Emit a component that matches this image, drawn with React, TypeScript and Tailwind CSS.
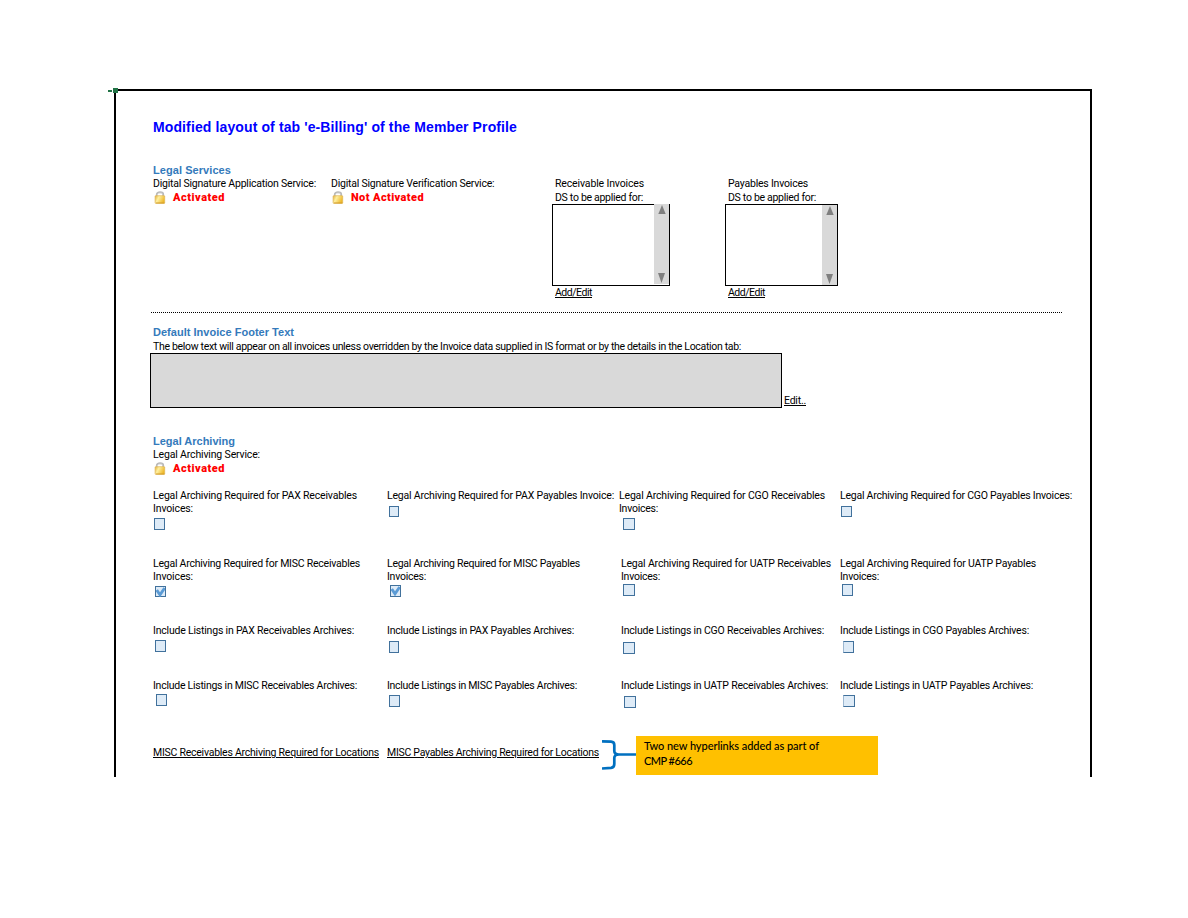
import { useLayoutEffect, useRef, useState } from "react";
import clsx from "clsx";

/** A single line of text whose letters are spaced so that it spans `w` pixels. */
function Line({ w, className, children }: { w: number; className?: string; children: string }) {
  const ref = useRef<HTMLSpanElement>(null);
  const [spacing, setSpacing] = useState(0);
  useLayoutEffect(() => {
    const el = ref.current;
    if (!el) return;
    el.style.letterSpacing = "0px";
    const natural = el.getBoundingClientRect().width;
    const next = (w - natural) / children.length;
    el.style.letterSpacing = `${next}px`;
    setSpacing(next);
  }, [w, children]);
  return (
    <div className="flex whitespace-nowrap">
      <span ref={ref} className={clsx("shrink-0", className)} style={{ letterSpacing: spacing }}>
        {children}
      </span>
    </div>
  );
}

const label = "h-[13px] text-[10.5px] leading-[13px]";
const link = "h-[13px] text-[10.5px] leading-[13px] underline underline-offset-[1px] decoration-1";
const heading = "h-[14px] text-[11px] leading-[14px] font-bold text-[#347abb] font-['Liberation_Sans',sans-serif]";

function Lock() {
  return (
    <svg width="12" height="13" viewBox="0 0 12 13" className="shrink-0">
      <defs>
        <linearGradient id="brass" x1="0" x2="1" y1="0" y2="0.4">
          <stop offset="0" stopColor="#e0ae3c" />
          <stop offset="0.4" stopColor="#fff0a0" />
          <stop offset="1" stopColor="#eeb92c" />
        </linearGradient>
      </defs>
      <path d="M2.800 6V3.4C2.800 .5 9.200 .5 9.200 3.400V6" fill="none" stroke="#b9b9b9" strokeWidth="1.900" />
      <path d="M3.600 5V3.500C3.800 1.800 8 1.500 8.700 3.200" fill="none" stroke="#e6e6e6" strokeWidth=".6" />
      <rect x="1.100" y="4.700" width="9.600" height="7.700" rx=".6" fill="url(#brass)" stroke="#dfb554" strokeWidth=".7" />
      <path d="M2 11.900H10.300" stroke="#d29c2c" strokeWidth=".8" />
    </svg>
  );
}

function Status({ text, w }: { text: string; w: number }) {
  return (
    <div className="flex h-[14px] items-start pl-px">
      <Lock />
      <div className="pl-[7px]">
        <Line w={w} className="h-[14px] text-[11px] leading-[14px] font-black text-[#ff0000]">{text}</Line>
      </div>
    </div>
  );
}

function ListBox({ size, bar, title, w }: { size: string; bar?: string; title: string; w: number }) {
  return (
    <div>
      <div className="pl-[3px]">
        <Line w={w} className={label}>{title}</Line>
        <div className="h-px" />
        <Line w={88} className={label}>DS to be applied for:</Line>
      </div>
      <div className={clsx("flex h-[82px] justify-end border border-black bg-white", size)}>
        <div className={clsx("flex w-[15px] flex-col items-center justify-between bg-[#d9d9d9] pt-px", bar)}>
          <svg width="8" height="9" viewBox="0 0 8 9"><path d="M4 0L7.700 9H.3Z" fill="#7f7f7f" /></svg>
          <svg width="7" height="10" viewBox="0 0 7 10"><path d="M0 0H7L3.500 10Z" fill="#7f7f7f" /></svg>
        </div>
      </div>
      <div className="pl-[3px]">
        <Line w={37} className={link}>Add/Edit</Line>
      </div>
    </div>
  );
}

function Box({ place, checked }: { place: string; checked?: boolean }) {
  return (
    <div className={clsx("border border-[#41719c] bg-[#deebf7]", place)}>
      {checked && (
        <svg width="9" height="10" viewBox="0 0 9 10" className="block">
          <path d="M.7 3L4 7.800L8.700 1" fill="none" stroke="#5b9bd5" strokeWidth="2.900" />
        </svg>
      )}
    </div>
  );
}

type Cell = { lines: [string, number][]; box: string; checked?: boolean; shift?: string };

const rows: { height: string; cells: Cell[] }[] = [
  {
    height: "h-[68px]",
    cells: [
      { lines: [["Legal Archiving Required for PAX Receivables", 204], ["Invoices:", 40]], box: "ml-px mt-[3px] w-[11px] h-[12px]" },
      { lines: [["Legal Archiving Required for PAX Payables Invoice:", 227]], box: "ml-[2px] mt-[4px] w-[10px] h-[11px]" },
      { lines: [["Legal Archiving Required for CGO Receivables", 206], ["Invoices:", 39]], box: "ml-[4px] mt-[3px] w-[12px] h-[12px]", shift: "-ml-[2px] mr-[2px]" },
      { lines: [["Legal Archiving Required for CGO Payables Invoices:", 232]], box: "ml-px mt-[4px] w-[11px] h-[11px]" },
    ],
  },
  {
    height: "h-[67px]",
    cells: [
      { lines: [["Legal Archiving Required for MISC Receivables", 207], ["Invoices:", 40]], box: "ml-[2px] mt-[3px] w-[11px] h-[11px]", checked: true },
      { lines: [["Legal Archiving Required for MISC Payables", 193], ["Invoices:", 39]], box: "ml-[3px] mt-[2px] w-[11px] h-[12px]", checked: true },
      { lines: [["Legal Archiving Required for UATP Receivables", 210], ["Invoices:", 39]], box: "ml-[2px] mt-px w-[12px] h-[12px]" },
      { lines: [["Legal Archiving Required for UATP Payables", 196], ["Invoices:", 39]], box: "ml-[2px] mt-px w-[11px] h-[12px]" },
    ],
  },
  {
    height: "h-[55px]",
    cells: [
      { lines: [["Include Listings in PAX Receivables Archives:", 201]], box: "ml-[2px] mt-[3px] w-[11px] h-[12px]" },
      { lines: [["Include Listings in PAX Payables Archives:", 187]], box: "ml-[2px] mt-[4px] w-[10px] h-[12px]" },
      { lines: [["Include Listings in CGO Receivables Archives:", 203]], box: "ml-[2px] mt-[5px] w-[12px] h-[12px]" },
      { lines: [["Include Listings in CGO Payables Archives:", 189]], box: "ml-[3px] mt-[4px] w-[11px] h-[12px] border-l-[#9db8d2]" },
    ],
  },
  {
    height: "h-[67px]",
    cells: [
      { lines: [["Include Listings in MISC Receivables Archives:", 204]], box: "ml-[3px] mt-[2px] w-[11px] h-[12px]" },
      { lines: [["Include Listings in MISC Payables Archives:", 190]], box: "ml-[2px] mt-[3px] w-[11px] h-[12px]" },
      { lines: [["Include Listings in UATP Receivables Archives:", 207]], box: "ml-[3px] mt-[4px] w-[12px] h-[12px]" },
      { lines: [["Include Listings in UATP Payables Archives:", 193]], box: "ml-[3px] mt-[3px] w-[12px] h-[12px] border-l-[#9db8d2]" },
    ],
  },
];

export default function App() {
  return (
    <div className="h-[918px] w-[1188px] overflow-hidden bg-white pt-[89px] pl-[114px] font-[Roboto,sans-serif] text-black">
      <main className="relative h-[688px] w-[978px] border-x-2 border-t-2 border-black pt-[28px] pl-[37px]">
        <div className="absolute -top-[3px] -left-[3px] size-[5px] bg-[#217346]" />
        <div className="absolute -top-px -left-[8px] h-[2px] w-[4px] bg-[#217346]" />

        <Line w={364} className="h-[16px] font-['Liberation_Sans',sans-serif] text-[14px] leading-[16px] font-bold text-[#0000ff]">
          Modified layout of tab 'e-Billing' of the Member Profile
        </Line>

        <section className="mt-[28px] h-[149px]">
          <Line w={78} className={heading}>Legal Services</Line>
          <div className="flex items-start">
            <div className="w-[178px]">
              <Line w={163} className={label}>Digital Signature Application Service:</Line>
              <div className="pt-px"><Status text="Activated" w={52} /></div>
            </div>
            <div className="w-[221px]">
              <Line w={163} className={label}>Digital Signature Verification Service:</Line>
              <div className="pt-px"><Status text="Not Activated" w={73} /></div>
            </div>
            <div className="w-[173px]">
              <ListBox size="w-[118px]" bar="-mt-px mb-px pb-px" title="Receivable Invoices" w={89} />
            </div>
            <ListBox size="w-[113px]" bar="pb-px" title="Payables Invoices" w={80} />
          </div>
        </section>

        <div className="-ml-[2px] h-px w-[911px] bg-[repeating-linear-gradient(90deg,#000_0_1px,#fff_1px_2px)]" />

        <section className="mt-[12px] h-[109px]">
          <Line w={141} className={heading}>Default Invoice Footer Text</Line>
          <div className="pt-px">
            <Line w={588} className={label}>
              The below text will appear on all invoices unless overridden by the Invoice data supplied in IS format or by the details in the Location tab:
            </Line>
          </div>
          <div className="-ml-[3px] flex items-end gap-[2px]">
            <div className="h-[55px] w-[632px] border border-black bg-[#d9d9d9]" />
            <div className="pb-px">
              <Line w={22} className={link}>Edit..</Line>
            </div>
          </div>
        </section>

        <section className="h-[55px]">
          <Line w={82} className={heading}>Legal Archiving</Line>
          <Line w={107} className={label}>Legal Archiving Service:</Line>
          <div className="pt-px"><Status text="Activated" w={52} /></div>
        </section>

        {rows.map((row, r) => (
          <div key={r} className={clsx("grid grid-cols-[234px_234px_219px_240px]", row.height)}>
            {row.cells.map((cell, c) => (
              <div key={c} className={cell.shift}>
                {cell.lines.map(([text, w]) => (
                  <Line key={text} w={w} className={label}>{text}</Line>
                ))}
                <Box place={cell.box} checked={cell.checked} />
              </div>
            ))}
          </div>
        ))}

        <div className="-mt-[10px] flex items-start">
          <div className="w-[234px] pt-[10px]">
            <Line w={226} className={link}>MISC Receivables Archiving Required for Locations</Line>
          </div>
          <div className="w-[215px] pt-[10px]">
            <Line w={212} className={link}>MISC Payables Archiving Required for Locations</Line>
          </div>
          <svg width="34" height="39" viewBox="0 0 34 39" className="shrink-0">
            <path
              d="M0 5.300L9 5.700Q12.300 6 12.300 9V15Q12.300 18.500 17 18.500Q12.300 18.500 12.300 22V28Q12.300 31.500 9 31.900L0 32.500M16 18.500H34"
              fill="none"
              stroke="#0070c0"
              strokeWidth="2.700"
            />
          </svg>
          <div className="h-[39px] w-[242px] bg-[#ffc000] pt-[3px] pl-[8px] font-[Lato,sans-serif]">
            <Line w={175} className="h-[14px] text-[11px] leading-[14px] font-medium">Two new hyperlinks added as part of</Line>
            <Line w={48} className="h-[15px] text-[11px] leading-[15px] font-medium">CMP #666</Line>
          </div>
        </div>
      </main>
    </div>
  );
}
